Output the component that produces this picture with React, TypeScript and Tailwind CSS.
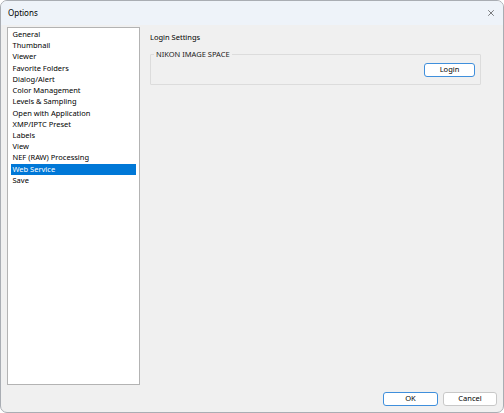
import { X } from 'lucide-react';

const pages = [
  'General',
  'Thumbnail',
  'Viewer',
  'Favorite Folders',
  'Dialog/Alert',
  'Color Management',
  'Levels & Sampling',
  'Open with Application',
  'XMP/IPTC Preset',
  'Labels',
  'View',
  'NEF (RAW) Processing',
  'Web Service',
  'Save',
];

function DialogButton({ label, primary = false }: { label: string; primary?: boolean }) {
  return (
    <button
      className={
        'h-[14px] rounded-[3px] bg-white text-[7.5px] leading-none text-black border ' +
        (primary ? 'border-[#3f8fdc]' : 'border-[#c8c8c8]')
      }
    >
      {label}
    </button>
  );
}

export default function App() {
  return (
    <div
      className="w-[504px] h-[413px] bg-white"
      style={{ fontFamily: "'Noto Sans', 'Open Sans', Arial, sans-serif" }}
    >
      <div className="w-full h-full flex flex-col rounded-[7px] border border-[#a9adb3] overflow-hidden bg-[#f0f0f0]">
        <div className="h-[24px] shrink-0 bg-[#eef3f9] flex items-center justify-between pl-[7px] pr-[7px]">
          <span className="text-[8px] text-black">Options</span>
          <X size={10} strokeWidth={1.5} className="text-[#333]" />
        </div>

        <div className="flex-1 min-h-0 flex flex-col pt-[2px] pl-[6px] pr-[6px] pb-[6px]">
          <div className="flex-1 min-h-0 flex gap-[10px]">
            <div className="w-[133px] h-[358px] shrink-0 bg-white border border-[#b3b3b3] pt-[1px] pl-[3px]">
              {pages.map((p) => (
                <div
                  key={p}
                  className={
                    'w-[125px] h-[11.23px] pl-[1.5px] text-[7.5px] leading-[11.23px] whitespace-nowrap ' +
                    (p === 'Web Service' ? 'bg-[#0078d7] text-white' : 'text-black')
                  }
                >
                  {p}
                </div>
              ))}
            </div>

            <div className="flex flex-col pt-[5px]">
              <div className="text-[7.5px] leading-[11px] text-black">Login Settings</div>
              <fieldset className="w-[331px] mt-[6px] border border-[#dcdcdc] rounded-[1px] px-0 pb-[7px]">
                <legend className="ml-[3px] px-[2px] text-[7.5px] leading-[11px] text-[#1a1a1a]">
                  NIKON IMAGE SPACE
                </legend>
                <div className="flex justify-end pt-[3px] pr-[5px]">
                  <div className="w-[51px] flex flex-col">
                    <DialogButton label="Login" primary />
                  </div>
                </div>
              </fieldset>
            </div>
          </div>

          <div className="flex justify-end gap-[5px] pt-[7px]">
            <div className="w-[55px] flex flex-col">
              <DialogButton label="OK" primary />
            </div>
            <div className="w-[54px] flex flex-col">
              <DialogButton label="Cancel" />
            </div>
          </div>
        </div>
      </div>
    </div>
  );
}
